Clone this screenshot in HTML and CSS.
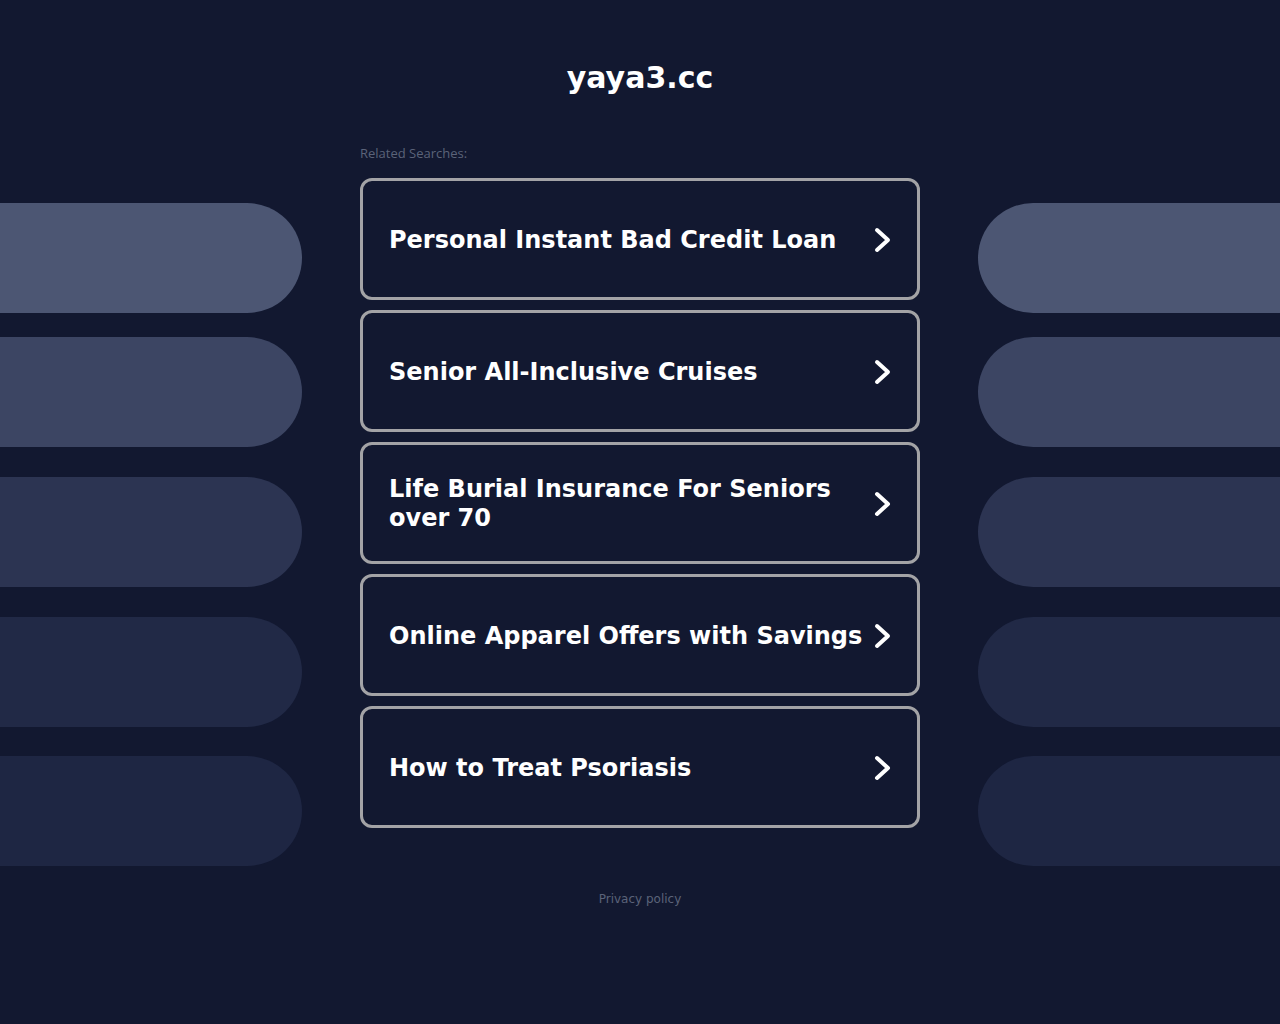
FILE: index.html
```html
<!DOCTYPE html>
<html lang="en">
<head>
<meta charset="utf-8">
<title>yaya3.cc</title>
<link rel="stylesheet" href="styles.css">
</head>
<body>
<div class="page">
  <div class="side side-left">
    <div class="pill p1"></div>
    <div class="pill p2"></div>
    <div class="pill p3"></div>
    <div class="pill p4"></div>
    <div class="pill p5"></div>
  </div>
  <main class="center">
    <h1 class="title">yaya3.cc</h1>
    <div class="label">Related Searches:</div>
    <div class="list">
      <a class="item" href="#"><span class="item-text">Personal Instant Bad Credit Loan</span><svg class="chev" viewBox="0 0 20 28" width="20" height="28"><path d="M4 4 L15 14 L4 24" fill="none" stroke="#fff" stroke-width="4" stroke-linecap="round" stroke-linejoin="round"/></svg></a>
      <a class="item" href="#"><span class="item-text">Senior All-Inclusive Cruises</span><svg class="chev" viewBox="0 0 20 28" width="20" height="28"><path d="M4 4 L15 14 L4 24" fill="none" stroke="#fff" stroke-width="4" stroke-linecap="round" stroke-linejoin="round"/></svg></a>
      <a class="item" href="#"><span class="item-text">Life Burial Insurance For Seniors over 70</span><svg class="chev" viewBox="0 0 20 28" width="20" height="28"><path d="M4 4 L15 14 L4 24" fill="none" stroke="#fff" stroke-width="4" stroke-linecap="round" stroke-linejoin="round"/></svg></a>
      <a class="item" href="#"><span class="item-text">Online Apparel Offers with Savings</span><svg class="chev" viewBox="0 0 20 28" width="20" height="28"><path d="M4 4 L15 14 L4 24" fill="none" stroke="#fff" stroke-width="4" stroke-linecap="round" stroke-linejoin="round"/></svg></a>
      <a class="item" href="#"><span class="item-text">How to Treat Psoriasis</span><svg class="chev" viewBox="0 0 20 28" width="20" height="28"><path d="M4 4 L15 14 L4 24" fill="none" stroke="#fff" stroke-width="4" stroke-linecap="round" stroke-linejoin="round"/></svg></a>
    </div>
    <div class="footer"><a href="#">Privacy policy</a></div>
  </main>
  <div class="side side-right">
    <div class="pill p1"></div>
    <div class="pill p2"></div>
    <div class="pill p3"></div>
    <div class="pill p4"></div>
    <div class="pill p5"></div>
  </div>
</div>
</body>
</html>
```
FILE: styles.css
```css
html, body {
  margin: 0;
  padding: 0;
  background: #121830;
  height: 100%;
}
body {
  font-family: "DejaVu Sans", "Liberation Sans", sans-serif;
  color: #fff;
}
.page {
  display: grid;
  grid-template-columns: 1fr 560px 1fr;
  column-gap: 58px;
  min-height: 1024px;
}
.side {
  display: flex;
  flex-direction: column;
  padding-top: 203px;
}
.pill {
  height: 110px;
  flex: none;
}
.side-left .pill { border-radius: 0 55px 55px 0; }
.side-right .pill { border-radius: 55px 0 0 55px; }
.p2 { margin-top: 24px; }
.p3 { margin-top: 30px; }
.p4 { margin-top: 30px; }
.p5 { margin-top: 29px; }
.p1 { background: #4c5673; }
.p2 { background: #3c4563; }
.p3 { background: #2c3452; }
.p4 { background: #212946; }
.p5 { background: #1e2643; }

.center {
  display: flex;
  flex-direction: column;
}
.title {
  margin: 61px 0 0;
  font-size: 30px;
  line-height: 34px;
  font-weight: bold;
  text-align: center;
  color: #fff;
}
.label {
  margin-top: 50px;
  font-family: "Open Sans", "DejaVu Sans", sans-serif;
  font-size: 13px;
  line-height: 17px;
  color: #5b6379;
}
.list {
  margin-top: 16px;
  display: flex;
  flex-direction: column;
  gap: 10px;
}
.item {
  box-sizing: border-box;
  height: 122px;
  border: 3px solid #a3a3a6;
  border-radius: 12px;
  display: flex;
  align-items: center;
  padding: 2px 24px 0 26px;
  text-decoration: none;
  color: #fff;
}
.item-text {
  flex: 1;
  font-size: 24px;
  line-height: 29px;
  font-weight: bold;
}
.chev {
  flex: none;
  margin-left: 0;
}
.footer {
  margin-top: 63px;
  text-align: center;
  font-size: 12px;
  line-height: 16px;
}
.footer a {
  color: #5b6379;
  text-decoration: none;
}
```
